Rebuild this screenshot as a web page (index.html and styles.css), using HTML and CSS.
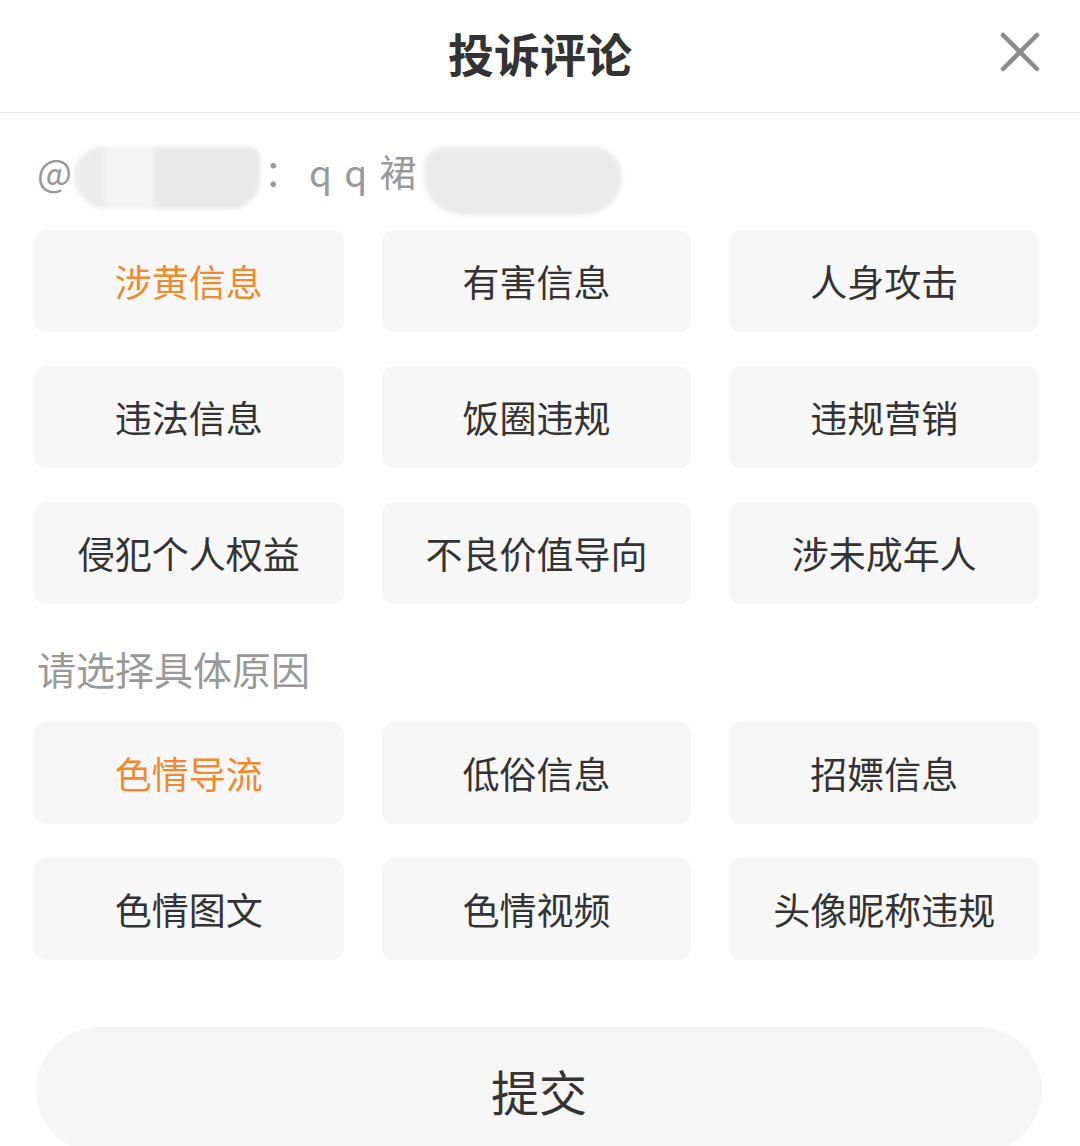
FILE: index.html
```html
<!DOCTYPE html>
<html lang="zh-CN">
<head>
    <meta charset="UTF-8">
    <meta name="viewport" content="width=device-width, initial-scale=1.0">
    <title>投诉评论</title>
    <link rel="stylesheet" href="styles.css">
</head>
<body>
    <div class="sheet">
        <header class="sheet-header">
            <span></span>
            <h1>投诉评论</h1>
            <button class="close" aria-label="关闭">
                <svg width="40" height="40" viewBox="0 0 40 40">
                    <path d="M3 3 L37 37 M37 3 L3 37" stroke="#8a8a8a" stroke-width="4.5" stroke-linecap="round" fill="none"/>
                </svg>
            </button>
        </header>

        <main class="content">
            <div class="comment">
                <span>@</span>
                <span class="blur blur-name"></span>
                <span class="colon">：</span>
                <span class="spaced">q q 裙</span>
                <span class="blur blur-text"></span>
            </div>

            <div class="options">
                <button class="option active">涉黄信息</button>
                <button class="option">有害信息</button>
                <button class="option">人身攻击</button>
                <button class="option">违法信息</button>
                <button class="option">饭圈违规</button>
                <button class="option">违规营销</button>
                <button class="option">侵犯个人权益</button>
                <button class="option">不良价值导向</button>
                <button class="option">涉未成年人</button>
            </div>

            <p class="label">请选择具体原因</p>

            <div class="options">
                <button class="option active">色情导流</button>
                <button class="option">低俗信息</button>
                <button class="option">招嫖信息</button>
                <button class="option">色情图文</button>
                <button class="option">色情视频</button>
                <button class="option">头像昵称违规</button>
            </div>

            <button class="submit">提交</button>
        </main>
    </div>
</body>
</html>
```

FILE: styles.css
```css
body {
    margin: 0;
    padding: 0;
    background-color: #fff;
    font-family: "Noto Sans CJK SC", "Noto Sans", sans-serif;
    color: #333;
    overflow: hidden;
}

.sheet {
    width: 1080px;
    height: 1146px;
    background-color: #fff;
    border-radius: 14px 14px 0 0;
    overflow: hidden;
}

.sheet-header {
    height: 113px;
    border-bottom: 1px solid #e6e6e6;
    display: grid;
    grid-template-columns: 1fr auto 1fr;
    align-items: center;
    box-sizing: border-box;
}

.sheet-header h1 {
    margin: 0;
    font-size: 46px;
    font-weight: 700;
    color: #333;
    line-height: 1;
    padding-bottom: 8px;
}

.close {
    justify-self: end;
    margin-right: 40px;
    margin-bottom: 8px;
    padding: 0;
    border: none;
    background: none;
    width: 40px;
    height: 40px;
}

.content {
    padding: 34px 41px 0 34px;
}

.comment {
    display: flex;
    align-items: center;
    height: 60px;
    padding-left: 3px;
    margin-bottom: 23px;
    font-size: 37px;
    color: #999;
    margin-top: -6px;
    padding-bottom: 6px;
}

.blur {
    display: inline-block;
    background-color: #ebebeb;
    border-radius: 28px 10px 30px 34px;
    filter: blur(2px);
}

.blur-name {
    width: 186px;
    height: 62px;
    margin: 14px 4px 0 2px;
    background: linear-gradient(to right, #ececec 0, #ececec 30px, #f4f4f4 30px, #f4f4f4 80px, #e9e9e9 80px);
}

.colon {
    margin-right: 8px;
}

.spaced {
    letter-spacing: 2px;
}

.blur-text {
    width: 198px;
    height: 68px;
    margin: 20px 0 0 6px;
    border-radius: 20px 30px 40px 40px;
}

.options {
    display: grid;
    grid-template-columns: repeat(3, 1fr);
    column-gap: 38px;
    row-gap: 34px;
}

.option {
    height: 102px;
    border: none;
    border-radius: 12px;
    background-color: #f7f7f7;
    font-family: inherit;
    font-size: 37px;
    color: #333;
    padding: 0;
    cursor: pointer;
}

.option.active {
    color: #ef8b2e;
}

.label {
    margin: 39px 0 29px 3px;
    height: 50px;
    line-height: 50px;
    font-size: 39px;
    color: #999;
}

.submit {
    display: block;
    width: 1006px;
    height: 126px;
    margin: 67px 0 0 2px;
    border: none;
    border-radius: 63px;
    background-color: #f6f6f6;
    font-family: inherit;
    font-size: 48px;
    color: #333;
    padding: 0;
}
```
